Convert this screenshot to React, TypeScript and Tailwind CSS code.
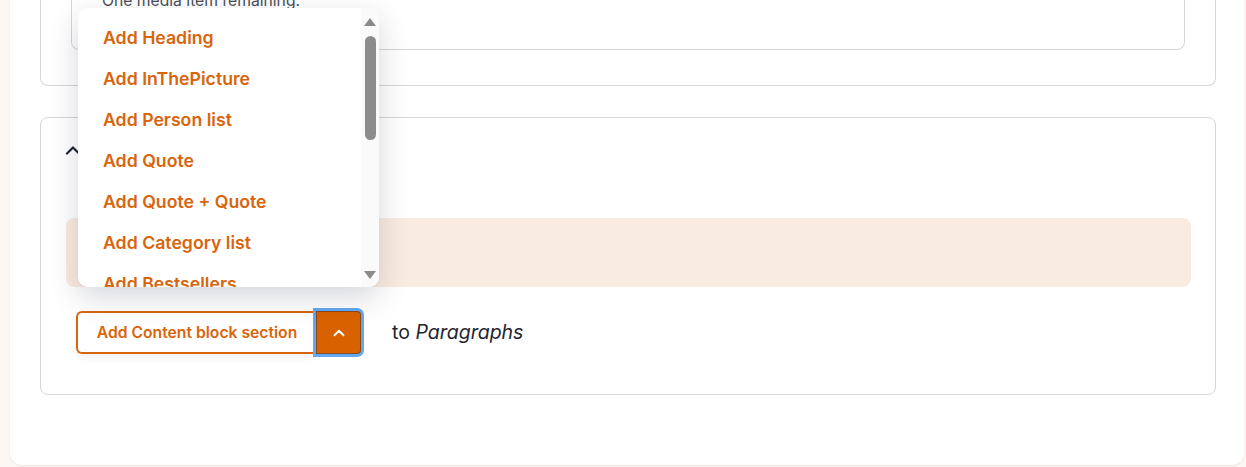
import { ChevronUp } from "lucide-react";

const items = [
  "Add Heading",
  "Add InThePicture",
  "Add Person list",
  "Add Quote",
  "Add Quote + Quote",
  "Add Category list",
  "Add Bestsellers",
];

function Dropdown() {
  return (
    <div className="absolute left-[2px] bottom-[calc(100%+24px)] w-[301px] h-[279px] bg-white rounded-[10px] shadow-[0_10px_30px_rgba(30,35,60,0.18)] overflow-hidden flex">
      <ul className="flex-1 pl-[25px] pt-[10px]">
        {items.map((label) => (
          <li
            key={label}
            className="h-[41px] flex items-center text-[17.7px] font-semibold text-[#d8650c] whitespace-nowrap"
          >
            {label}
          </li>
        ))}
      </ul>
      <div className="w-[18px] bg-[#fafafa] flex flex-col items-center pt-[10px] pb-[8px]">
        <svg width="12" height="8" viewBox="0 0 12 8" className="mb-[10px]">
          <polygon points="6,0 12,8 0,8" fill="#8a8a8a" />
        </svg>
        <div className="w-[11px] h-[104px] rounded-full bg-[#8c8c8c]" />
        <div className="flex-1" />
        <svg width="12" height="8" viewBox="0 0 12 8">
          <polygon points="0,0 12,0 6,8" fill="#8a8a8a" />
        </svg>
      </div>
    </div>
  );
}

export default function App() {
  return (
    <div
      className="h-[467px] overflow-hidden bg-[#fcf7f2]"
      style={{ fontFamily: "Inter, 'Noto Sans', sans-serif" }}
    >
      <div className="ml-[10px] w-[1234px] h-[465px] bg-white rounded-b-[12px] shadow-[0_1px_2px_rgba(0,0,0,0.08)] pl-[30px] pr-[28px]">
        {/* previous paragraph, cut off at the top */}
        <div className="h-[86px] border-x border-b border-[#d6d6d6] rounded-b-lg px-[30px] overflow-hidden">
          <div className="h-[50px] border-x border-b border-[#d6d6d6] rounded-b-lg px-[30px] overflow-hidden">
            <p className="-mt-[9px] text-[15.7px] leading-[20px] text-[#4a4f57]">
              One media item remaining.
            </p>
          </div>
        </div>

        {/* content block section */}
        <div className="mt-[31px] h-[278px] border border-[#d6d6d6] rounded-lg pl-[25px] pr-[24px]">
          <div className="pt-[23px] h-[100px]">
            <svg width="16" height="10" viewBox="0 0 16 10" className="mt-[4px] -ml-[1px]">
              <polyline
                points="2,8.5 8,2.5 14,8.5"
                fill="none"
                stroke="#1f2430"
                strokeWidth="2.2"
                strokeLinecap="round"
                strokeLinejoin="round"
              />
            </svg>
          </div>
          <div className="h-[69px] rounded-lg bg-[#faebe0]" />

          <div className="mt-[24px] pl-[10px] flex items-center">
            <div className="relative flex">
              <Dropdown />
              <button className="h-[43px] w-[240px] border-2 border-[#d8650c] rounded-l-[6px] border-r-0 text-[15.7px] font-semibold text-[#d8650c] bg-white shadow-[0_4px_10px_rgba(0,0,0,0.06)]">
                Add Content block section
              </button>
              <button className="h-[43px] w-[45px] bg-[#d96200] rounded-r-[4px] border border-[#5a3a2a]/60 ring-[3px] ring-[#62a8f2] flex items-center justify-center">
                <ChevronUp size={18} strokeWidth={2.5} color="#ffffff" />
              </button>
            </div>
            <span className="ml-[31px] text-[19.5px] text-[#1f2430]">
              to <em className="italic">Paragraphs</em>
            </span>
          </div>
        </div>
      </div>
    </div>
  );
}
